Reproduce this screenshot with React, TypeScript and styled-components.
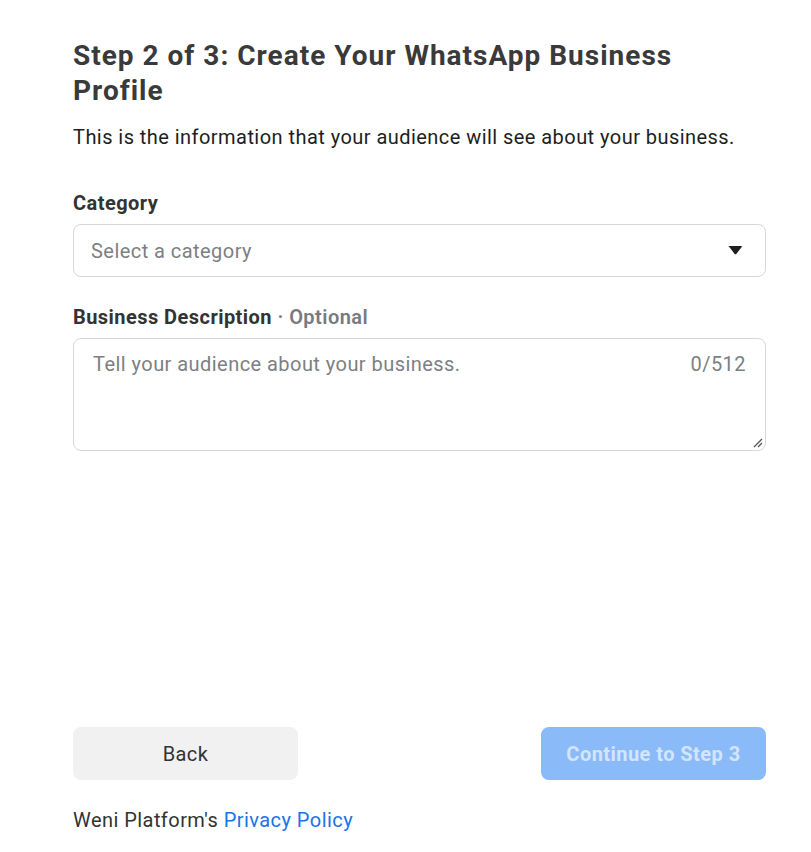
import styled, { createGlobalStyle } from "styled-components";

const GlobalStyle = createGlobalStyle`
  body {
    margin: 0;
    background: #ffffff;
    font-family: Roboto, "Liberation Sans", Arial, sans-serif;
    letter-spacing: 0.45px;
  }
`;

const Page = styled.div`
  width: 693px;
  padding: 38px 0 0 73px;
  display: flex;
  flex-direction: column;
`;

const Title = styled.h1`
  margin: 0;
  font-size: 28px;
  line-height: 35px;
  font-weight: 700;
  letter-spacing: 1px;
  color: #3a3a3a;
`;

const Subtitle = styled.p`
  margin: 15px 0 0;
  font-size: 20px;
  line-height: 28px;
  color: #1c1e21;
`;

const Label = styled.label<{ $first?: boolean }>`
  display: block;
  margin-top: ${(p) => (p.$first ? "40px" : "28px")};
  font-size: 20px;
  line-height: 24px;
  font-weight: 700;
  color: #333333;
`;

const Optional = styled.span`
  color: #777a7e;
  font-weight: 600;
`;

const Field = styled.div`
  position: relative;
  margin-top: 9px;
  box-sizing: border-box;
  border: 1px solid #d5d7da;
  border-radius: 8px;
  background: #fff;
`;

const SelectBox = styled(Field)`
  height: 53px;
  display: flex;
  align-items: center;
  justify-content: space-between;
  padding: 0 22px 0 17px;
`;

const Placeholder = styled.span`
  font-size: 20px;
  color: #7c7f83;
`;

const Caret = styled.svg`
  width: 15px;
  height: 9px;
  display: block;
`;

const TextBox = styled(Field)`
  height: 113px;
  display: flex;
  justify-content: space-between;
  align-items: flex-start;
  padding: 13px 19px 0 19px;
`;

const Counter = styled.span`
  font-size: 20px;
  color: #7c7f83;
`;

const Grip = styled.svg`
  position: absolute;
  right: 2px;
  bottom: 2px;
  width: 12px;
  height: 12px;
`;

const Actions = styled.div`
  margin-top: 276px;
  display: flex;
  justify-content: space-between;
`;

const Button = styled.button<{ $primary?: boolean }>`
  width: 225px;
  height: 53px;
  border: none;
  border-radius: 8px;
  font-family: inherit;
  letter-spacing: inherit;
  font-size: 20px;
  font-weight: ${(p) => (p.$primary ? 700 : 400)};
  background: ${(p) => (p.$primary ? "#8bbaf8" : "#f1f1f1")};
  color: ${(p) => (p.$primary ? "#d3e5fd" : "#333333")};
  cursor: ${(p) => (p.$primary ? "default" : "pointer")};
`;

const Footer = styled.p`
  margin: 28px 0 0;
  font-size: 20px;
  line-height: 24px;
  color: #333333;
`;

const Link = styled.a`
  color: #1a73e8;
  text-decoration: none;
`;

export default function App() {
  return (
    <>
      <GlobalStyle />
      <Page>
        <Title>Step 2 of 3: Create Your WhatsApp Business Profile</Title>
        <Subtitle>This is the information that your audience will see about your business.</Subtitle>

        <Label $first>Category</Label>
        <SelectBox>
          <Placeholder>Select a category</Placeholder>
          <Caret viewBox="0 0 15 9">
            <path d="M0.5 1.2 Q0.5 0 1.8 0 H13.2 Q14.5 0 13.7 1 L8.3 7.9 Q7.5 8.8 6.7 7.9 L1.3 1 Z" fill="#1c1e21" />
          </Caret>
        </SelectBox>

        <Label>
          Business Description <Optional>· Optional</Optional>
        </Label>
        <TextBox>
          <Placeholder>Tell your audience about your business.</Placeholder>
          <Counter>0/512</Counter>
          <Grip viewBox="0 0 12 12">
            <path d="M11 3 L3 11 M11 7 L7 11" stroke="#555" strokeWidth="1.3" />
          </Grip>
        </TextBox>

        <Actions>
          <Button>Back</Button>
          <Button $primary disabled>
            Continue to Step 3
          </Button>
        </Actions>

        <Footer>
          Weni Platform's <Link href="#">Privacy Policy</Link>
        </Footer>
      </Page>
    </>
  );
}
